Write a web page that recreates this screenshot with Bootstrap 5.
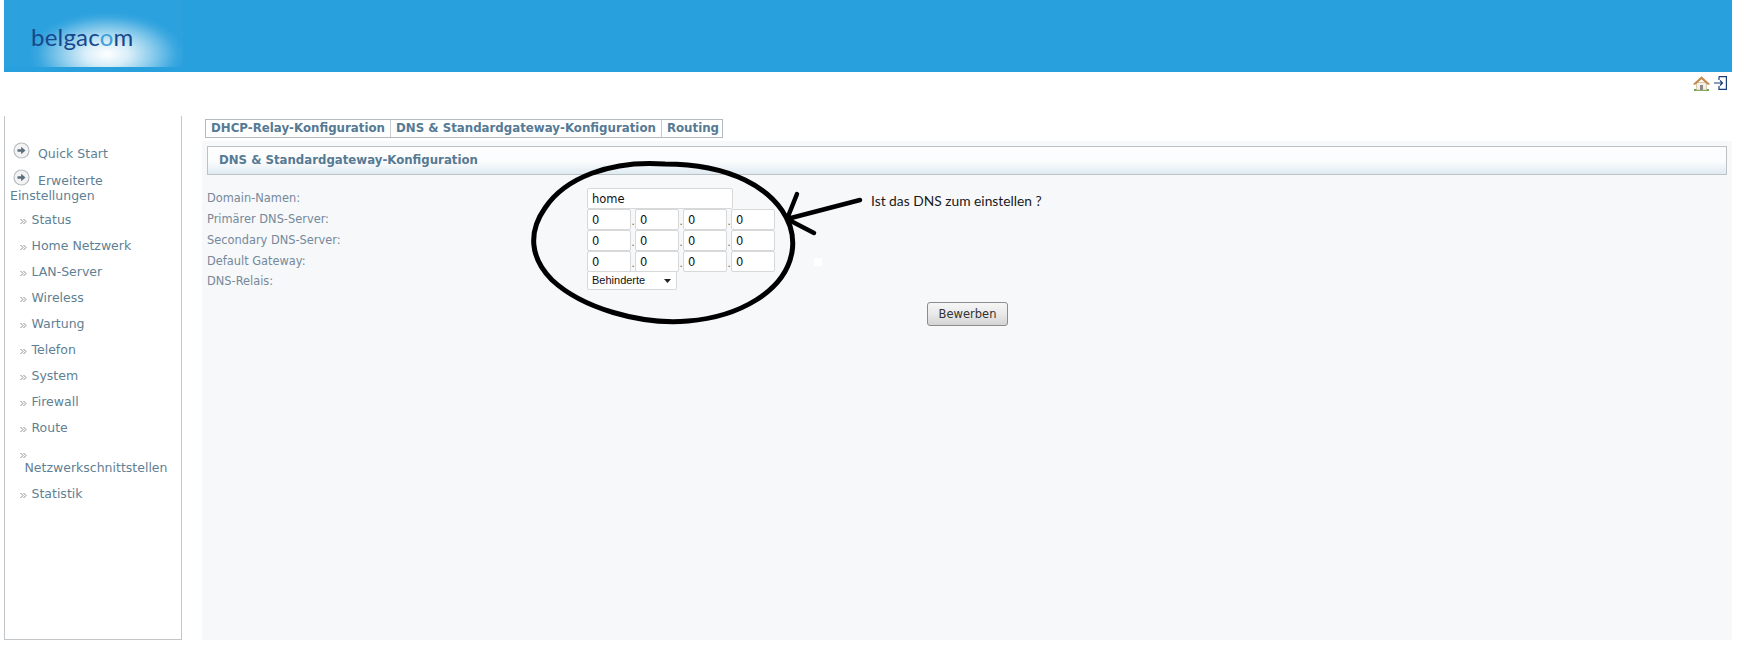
<!DOCTYPE html>
<html lang="de">
<head>
<meta charset="utf-8">
<title>belgacom</title>
<link href="https://cdn.jsdelivr.net/npm/bootstrap@5.3.0/dist/css/bootstrap.min.css" rel="stylesheet">
<style>
body{background:#fff;font-family:"DejaVu Sans",sans-serif;color:#5f7f94;height:648px;overflow:hidden}
.shell{width:1728px;margin-left:4px;position:relative}
.banner{height:72px;background:#28a0dd}
.logo-box{width:179px;height:67px;background:radial-gradient(ellipse 78px 42px at 103px 54px,#fff 0%,#d8eef9 28%,#8cccec 58%,#3ba8e0 88%,#2ba1de 100%);color:#17478c;font-family:"Lato",sans-serif;font-size:24px;line-height:1;padding:25px 0 0 27px;letter-spacing:.2px}
.logo-box i{font-style:normal;color:#3f9fd8}
.toolrow{height:44px;padding:4px 5px 0 0}
.mainrow{height:524px;gap:20px}
.sidenav{width:178px;flex:none;border:1px solid #c2c6c9;border-top-width:0;padding:31px 0 0 0;font-size:12.500px;line-height:14px;color:#5f7f94}
.top-link{padding-left:5px;margin-bottom:12px}
.top-link+.top-link{margin-bottom:10px}
.top-link svg{margin:-5px 5px 3px 3px;vertical-align:middle}
.top-link span{margin-left:3px}
.side-item{padding:0 8px 0 19.500px;text-indent:-5px;margin-bottom:12px}
.side-item svg{margin-right:5px;vertical-align:-1px}
.rightcol{min-width:0}
.tabset{margin:3px 0 3px 3px;border:1px solid #b4babe;font-size:11.800px;font-weight:700;line-height:17px;color:#557a94;width:518px}
.tabset span{padding:0 5px;border-right:1px solid #c9cdd0;white-space:nowrap}
.tabset span:last-child{border-right:0}
.workarea{background:#f7f8fa;flex:1;padding:5px 5px 0 5px}
.panelhead{height:29px;border:1px solid #bcc2c6;background:linear-gradient(#fdfdfe 0%,#fbfcfd 55%,#dfeaf2 100%);font-size:11.750px;font-weight:700;line-height:27px;padding-left:11px;color:#557a94}
.formarea{font-size:11.400px;color:#75899a;margin-top:13px}
.frow{height:21px}
.frow-last{margin-top:-1px}
.frow-label{width:380px;flex:none;line-height:21px}
.form-control.cellbox,.form-select.cellbox{border:1px solid #d6d8da;border-radius:2px;font-size:11.500px;color:#111;padding:0 3px 0 4px;height:21px;line-height:19px;background-color:#fff;min-height:0;box-shadow:none}
.form-control.wide{width:146px}
.form-control.oct{width:44px}
.ipdot{width:4px;text-align:center;line-height:26px;color:#555;font-size:10px}
.form-select.pick{width:90px;height:19px;font-family:"Liberation Sans",sans-serif;font-size:11px;line-height:17px;padding:0 14px 0 4px;background-image:url("data:image/svg+xml,%3Csvg xmlns='http://www.w3.org/2000/svg' viewBox='0 0 7 4'%3E%3Cpath d='M0 0h7L3.5 4z' fill='%23222'/%3E%3C/svg%3E");background-size:7px 4px;background-position:right 5px center}
.applyrow{padding-left:720px;margin-top:10px}
.btn.applybtn{width:81px;height:24px;padding:0;font-size:11.500px;line-height:21px;color:#333;border:1px solid #8c8c8c;border-radius:3px;background:linear-gradient(#f6f6f6,#e9e9e9 50%,#d4d4d4)}
.scribble{position:absolute;left:0;top:0;pointer-events:none}
.askme{position:absolute;left:867px;top:192px;font-family:"Lato",sans-serif;font-size:13.800px;line-height:18px;color:#1a1a1a;white-space:nowrap}
.specksq{position:absolute;left:810px;top:258px;width:8px;height:8px;background:#fff}
</style>
</head>
<body>
<div class="shell">
  <div class="banner">
    <div class="logo-box">belgac<i>o</i>m</div>
  </div>
  <div class="toolrow d-flex justify-content-end align-items-start gap-1">
    <svg width="17" height="15" viewBox="0 0 17 15"><path d="M1 13h15v2H1z" fill="#6aa84f"/><path d="M3.500 6.500h10V14h-10z" fill="#f4efe4" stroke="#c8b690" stroke-width=".7"/><path d="M7 9h3v5H7z" fill="#8a8a8a"/><path d="M.5 8 8.500.7 16.500 8 15 8.500 8.500 3 2 8.500z" fill="#c98b45" stroke="#a8692b" stroke-width=".5"/></svg>
    <svg class="ms-0" width="13" height="14" viewBox="0 0 13 14" fill="none" stroke="#173f7a" stroke-width="1.200"><path d="M5 .6h7.400v12.800H5V10M5 4V.6"/><path d="M0 7h8M6 4.500 8.500 7 6 9.500"/></svg>
  </div>
  <div class="mainrow d-flex">
    <nav class="sidenav">
      <div class="top-link"><svg width="17" height="17" viewBox="0 0 17 17"><circle cx="8.500" cy="8.500" r="7.500" fill="#f3f3f3" stroke="#b9bdbf" stroke-width="1.200"/><path d="M4.500 7.300h3.700V4.800L12.500 8.500l-4.300 3.700V9.700H4.500z" fill="#5a6e7c"/></svg><span>Quick Start</span></div>
      <div class="top-link"><svg width="17" height="17" viewBox="0 0 17 17"><circle cx="8.500" cy="8.500" r="7.500" fill="#f3f3f3" stroke="#b9bdbf" stroke-width="1.200"/><path d="M4.500 7.300h3.700V4.800L12.500 8.500l-4.300 3.700V9.700H4.500z" fill="#5a6e7c"/></svg><span>Erweiterte</span> Einstellungen</div>
      <div class="side-item"><svg width="7" height="7" viewBox="0 0 7 7" fill="none" stroke="#8a8a8a"><path d="M.5 1 3 3.500.5 6M3.500 1 6 3.500 3.500 6"/></svg>Status</div>
      <div class="side-item"><svg width="7" height="7" viewBox="0 0 7 7" fill="none" stroke="#8a8a8a"><path d="M.5 1 3 3.500.5 6M3.500 1 6 3.500 3.500 6"/></svg>Home Netzwerk</div>
      <div class="side-item"><svg width="7" height="7" viewBox="0 0 7 7" fill="none" stroke="#8a8a8a"><path d="M.5 1 3 3.500.5 6M3.500 1 6 3.500 3.500 6"/></svg>LAN-Server</div>
      <div class="side-item"><svg width="7" height="7" viewBox="0 0 7 7" fill="none" stroke="#8a8a8a"><path d="M.5 1 3 3.500.5 6M3.500 1 6 3.500 3.500 6"/></svg>Wireless</div>
      <div class="side-item"><svg width="7" height="7" viewBox="0 0 7 7" fill="none" stroke="#8a8a8a"><path d="M.5 1 3 3.500.5 6M3.500 1 6 3.500 3.500 6"/></svg>Wartung</div>
      <div class="side-item"><svg width="7" height="7" viewBox="0 0 7 7" fill="none" stroke="#8a8a8a"><path d="M.5 1 3 3.500.5 6M3.500 1 6 3.500 3.500 6"/></svg>Telefon</div>
      <div class="side-item"><svg width="7" height="7" viewBox="0 0 7 7" fill="none" stroke="#8a8a8a"><path d="M.5 1 3 3.500.5 6M3.500 1 6 3.500 3.500 6"/></svg>System</div>
      <div class="side-item"><svg width="7" height="7" viewBox="0 0 7 7" fill="none" stroke="#8a8a8a"><path d="M.5 1 3 3.500.5 6M3.500 1 6 3.500 3.500 6"/></svg>Firewall</div>
      <div class="side-item"><svg width="7" height="7" viewBox="0 0 7 7" fill="none" stroke="#8a8a8a"><path d="M.5 1 3 3.500.5 6M3.500 1 6 3.500 3.500 6"/></svg>Route</div>
      <div class="side-item"><svg width="7" height="7" viewBox="0 0 7 7" fill="none" stroke="#8a8a8a"><path d="M.5 1 3 3.500.5 6M3.500 1 6 3.500 3.500 6"/></svg>Netzwerkschnittstellen</div>
      <div class="side-item"><svg width="7" height="7" viewBox="0 0 7 7" fill="none" stroke="#8a8a8a"><path d="M.5 1 3 3.500.5 6M3.500 1 6 3.500 3.500 6"/></svg>Statistik</div>
    </nav>
    <div class="rightcol flex-grow-1 d-flex flex-column">
      <div class="tabset d-flex"><span>DHCP-Relay-Konfiguration</span><span>DNS &amp; Standardgateway-Konfiguration</span><span>Routing</span></div>
      <div class="workarea">
        <div class="panelhead">DNS &amp; Standardgateway-Konfiguration</div>
        <div class="formarea">
          <div class="frow d-flex"><div class="frow-label">Domain-Namen:</div><input class="form-control cellbox wide" value="home"></div>
          <div class="frow d-flex"><div class="frow-label">Primärer DNS-Server:</div><input class="form-control cellbox oct" value="0"><span class="ipdot">.</span><input class="form-control cellbox oct" value="0"><span class="ipdot">.</span><input class="form-control cellbox oct" value="0"><span class="ipdot">.</span><input class="form-control cellbox oct" value="0"></div>
          <div class="frow d-flex"><div class="frow-label">Secondary DNS-Server:</div><input class="form-control cellbox oct" value="0"><span class="ipdot">.</span><input class="form-control cellbox oct" value="0"><span class="ipdot">.</span><input class="form-control cellbox oct" value="0"><span class="ipdot">.</span><input class="form-control cellbox oct" value="0"></div>
          <div class="frow d-flex"><div class="frow-label">Default Gateway:</div><input class="form-control cellbox oct" value="0"><span class="ipdot">.</span><input class="form-control cellbox oct" value="0"><span class="ipdot">.</span><input class="form-control cellbox oct" value="0"><span class="ipdot">.</span><input class="form-control cellbox oct" value="0"></div>
          <div class="frow frow-last d-flex"><div class="frow-label">DNS-Relais:</div><select class="form-select cellbox pick"><option>Behinderte</option></select></div>
          <div class="applyrow"><button type="button" class="btn applybtn">Bewerben</button></div>
        </div>
      </div>
    </div>
  </div>
  <svg class="scribble" width="1000" height="400" viewBox="4 0 1000 400" fill="none" stroke="#000" stroke-linecap="round" stroke-linejoin="round">
    <path stroke-width="5" d="M665 164C610 160 565 178 545 208C528 232 530 258 552 280C582 308 640 325 688 321C738 317 785 292 792 252C797 222 776 195 745 180C720 168 690 164 665 164Z"/>
    <path stroke-width="4.500" d="M860 200 787 219M797 194 787 219 814 233"/>
  </svg>
  <div class="specksq"></div>
  <div class="askme">Ist das DNS zum einstellen ?</div>
</div>
<script src="https://cdn.jsdelivr.net/npm/bootstrap@5.3.0/dist/js/bootstrap.bundle.min.js"></script>
</body>
</html>
